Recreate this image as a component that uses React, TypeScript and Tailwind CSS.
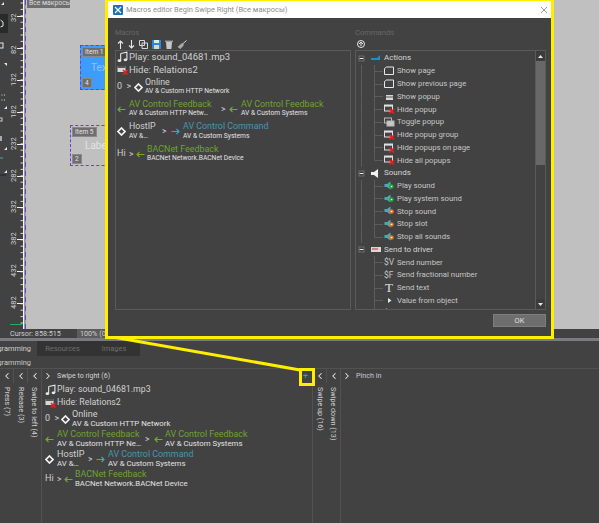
import React from "react";
import { ChevronLeft, ChevronRight } from "lucide-react";

const Music = () => (
  <svg width="11" height="12" viewBox="0 0 12 12" className="shrink-0">
    <path d="M4 2.2 L10.8 .8 V9" fill="none" stroke="#e8e8e8" strokeWidth="1.2" />
    <path d="M4 2.2 V10" fill="none" stroke="#e8e8e8" strokeWidth="1.2" />
    <ellipse cx="2.6" cy="10" rx="2" ry="1.5" fill="#e8e8e8" />
    <ellipse cx="9.2" cy="9" rx="2" ry="1.5" fill="#e8e8e8" />
  </svg>
);
const HideIcon = () => (
  <svg width="11" height="11" viewBox="0 0 11 11" className="shrink-0">
    <rect x=".5" y="2" width="8" height="6" fill="#d8d8d8" />
    <rect x=".5" y="2" width="8" height="2" fill="#555" />
    <path d="M6 6 L10.5 10.5 M10.5 6 L6 10.5" stroke="#ee1c1c" strokeWidth="1.7" />
  </svg>
);
const Diamond = () => (
  <svg width="9" height="9" viewBox="0 0 9 9" className="shrink-0">
    <path d="M4.5 1 L8 4.5 L4.5 8 L1 4.5 Z" fill="none" stroke="#f2f2f2" strokeWidth="1.7" />
  </svg>
);
const ArrowL = () => (
  <svg width="9" height="7" viewBox="0 0 9 7" className="shrink-0">
    <path d="M8.5 3.5 H1 M3.5 1 L1 3.5 L3.5 6" fill="none" stroke="#74ab2c" strokeWidth="1.1" />
  </svg>
);
const ArrowR = () => (
  <svg width="9" height="7" viewBox="0 0 9 7" className="shrink-0">
    <path d="M.5 3.5 H8 M5.5 1 L8 3.5 L5.5 6" fill="none" stroke="#3fa3cc" strokeWidth="1.2" />
  </svg>
);

const plain = "text-[#d0d0d0]";
const green = "text-[#6ea32d]";
const blue = "text-[#4795b5]";

type Cfg = {
  root: string;
  play: string;
  top: string;
  online: string;
  sub: string;
  h1: string;
  row: string;
  zero: string;
  dia: string;
  av1: string;
  gt1: string;
  arr2: string;
  host: string;
  gt2: string;
  arr3: string;
  gt3: string;
  arr4: string;
  sub1: string;
};

const small: Cfg = {
  root: "flex flex-col pl-[3px]",
  play: "text-[8.8px]",
  top: "text-[8.9px]",
  online: "text-[9.1px]",
  sub: "text-[7.8px]",
  h1: "h-[13px]",
  row: "h-[20px]",
  zero: "w-[16px]",
  dia: "w-[11px]",
  av1: "w-[88px]",
  gt1: "w-[9px]",
  arr2: "w-[11px]",
  host: "w-[31px]",
  gt2: "w-[8px]",
  arr3: "w-[12px]",
  gt3: "w-[7px]",
  arr4: "w-[11px]",
  sub1: "AV & Custom HTTP Ne…",
};
const big: Cfg = {
  root: "flex flex-col pl-[1px]",
  play: "text-[9.5px]",
  top: "text-[8.9px]",
  online: "text-[8.8px]",
  sub: "text-[6.7px]",
  h1: "h-[12.5px]",
  row: "h-[22.3px]",
  zero: "w-[17px]",
  dia: "w-[11px]",
  av1: "w-[92px]",
  gt1: "w-[8px]",
  arr2: "w-[12px]",
  host: "w-[33px]",
  gt2: "w-[9px]",
  arr3: "w-[12px]",
  gt3: "w-[7px]",
  arr4: "w-[11px]",
  sub1: "AV & Custom HTTP Netw…",
};

function Two({ top, sub, color, size, subSize }: { top: string; sub: string; color: string; size: string; subSize: string }) {
  return (
    <div className="flex flex-col">
      <span className={`${color} ${size} leading-[9.5px] whitespace-nowrap`}>{top}</span>
      <span className={`text-[#e2e2e2] ${subSize} leading-[9.5px] whitespace-nowrap`}>{sub}</span>
    </div>
  );
}

function MacroList({ c }: { c: Cfg }) {
  const box = "w-[12px] shrink-0 flex items-center";
  const gt = `${plain} text-[8.5px] shrink-0`;
  return (
    <div className={c.root}>
      <div className={`flex items-center ${c.h1}`}>
        <span className={box}><Music /></span>
        <span className={`${plain} ${c.play} whitespace-nowrap`}>Play: sound_04681.mp3</span>
      </div>
      <div className={`flex items-center ${c.h1}`}>
        <span className={box}><HideIcon /></span>
        <span className={`${plain} ${c.play} whitespace-nowrap`}>Hide: Relations2</span>
      </div>
      <div className={`flex items-center ${c.row}`}>
        <span className={`${plain} ${c.zero} text-[9px] shrink-0 whitespace-pre`}>0 {" "}&gt;</span>
        <span className={`${c.dia} shrink-0 flex`}><Diamond /></span>
        <Two top="Online" sub="AV & Custom HTTP Network" color={plain} size={c.online} subSize={c.sub} />
      </div>
      <div className={`flex items-center ${c.row}`}>
        <span className={box}><ArrowL /></span>
        <div className={`${c.av1} shrink-0`}>
          <Two top="AV Control Feedback" sub={c.sub1} color={green} size={c.top} subSize={c.sub} />
        </div>
        <span className={`${gt} ${c.gt1}`}>&gt;</span>
        <span className={`${c.arr2} shrink-0 flex`}><ArrowL /></span>
        <Two top="AV Control Feedback" sub="AV & Custom Systems" color={green} size={c.top} subSize={c.sub} />
      </div>
      <div className={`flex items-center ${c.row}`}>
        <span className={box}><Diamond /></span>
        <div className={`${c.host} shrink-0`}>
          <Two top="HostIP" sub="AV &…" color={plain} size={c.online} subSize={c.sub} />
        </div>
        <span className={`${gt} ${c.gt2}`}>&gt;</span>
        <span className={`${c.arr3} shrink-0 flex`}><ArrowR /></span>
        <Two top="AV Control Command" sub="AV & Custom Systems" color={blue} size={c.top} subSize={c.sub} />
      </div>
      <div className={`flex items-center ${c.row}`}>
        <span className={`${plain} ${box} text-[9px]`}>Hi</span>
        <span className={`${gt} ${c.gt3}`}>&gt;</span>
        <span className={`${c.arr4} shrink-0 flex`}><ArrowL /></span>
        <Two top="BACNet Feedback" sub="BACNet Network.BACNet Device" color={green} size={c.top} subSize={c.sub} />
      </div>
    </div>
  );
}

const Guide = ({ last, vert = true }: { last?: boolean; vert?: boolean }) => (
  <svg width="28" height="12.75" viewBox="0 0 28 12.75" className="shrink-0">
    {vert && <path d="M5.5 0 V12.75" stroke="#5c5c5c" />}
    <path d={last ? "M18.5 0 V6.5" : "M18.5 0 V12.75"} stroke="#5c5c5c" />
    <path d="M18.5 6.5 H27" stroke="#5c5c5c" />
  </svg>
);

type K = "page" | "popup" | "hide" | "toggle" | "play" | "stop" | "v" | "f" | "t" | "tri";
function TIcon({ k }: { k: K }) {
  if (k === "v" || k === "f")
    return <span className="w-[13px] shrink-0 text-[8.5px] leading-none text-[#c4c4c4]">{k === "v" ? "$V" : "$F"}</span>;
  if (k === "t")
    return <span className="w-[13px] shrink-0 pl-[1px] text-[13px] leading-none text-[#e0e0e0] [font-family:'Liberation_Serif',serif]">T</span>;
  return (
    <svg width="13" height="12" viewBox="0 0 13 12" className="shrink-0">
      {k === "page" && <path d="M.5 9.5 V3.5 L2.5 2 H9.5 V9.5 Z" fill="none" stroke="#e8e8e8" />}
      {k === "popup" && (
        <>
          <rect x="2" y="4" width="7" height="5" fill="#d8d8d8" />
          <rect x="2" y="5.5" width="7" height="1" fill="#555" />
        </>
      )}
      {k === "hide" && (
        <>
          <rect x=".5" y="2" width="8" height="6" fill="#444" stroke="#e0e0e0" />
          <rect x="1" y="2" width="7" height="1.6" fill="#e0e0e0" />
          <path d="M5.5 6 L10 10.5 M10 6 L5.5 10.5" stroke="#ee1c1c" strokeWidth="1.7" />
        </>
      )}
      {k === "toggle" && (
        <>
          <rect x=".5" y="2" width="7" height="5" fill="#444" stroke="#b8b8b8" />
          <rect x="3" y="5" width="7" height="5" fill="#c8c8c8" stroke="#b8b8b8" />
        </>
      )}
      {(k === "play" || k === "stop") && (
        <>
          <path d="M.5 4 H3 L6.5 1.5 V9.5 L3 7 H.5 Z" fill="#4aa7b5" />
          <circle cx="7.5" cy="6.5" r="2.3" fill={k === "play" ? "#1faa2c" : "#e8791a"} />
          <circle cx="7.5" cy="6.5" r=".8" fill="#fff" />
        </>
      )}
      {k === "tri" && <path d="M4 3 L7.5 5.5 L4 8 Z" fill="#e8e8e8" />}
    </svg>
  );
}

function Leaf({ k, t, last, vert }: { k: K; t: string; last?: boolean; vert?: boolean }) {
  return (
    <div className="flex items-center h-[12.75px]">
      <Guide last={last} vert={vert} />
      <TIcon k={k} />
      <span className="text-[7.75px] text-[#c6c6c6] whitespace-nowrap">{t}</span>
    </div>
  );
}

function Parent({ icon, t }: { icon: React.ReactNode; t: string }) {
  return (
    <div className="flex items-center h-[12.75px]">
      <svg width="15" height="12.75" viewBox="0 0 15 12.75" className="shrink-0">
        <rect x="3" y="4" width="5" height="5" fill="#3d3d3d" stroke="#777" strokeWidth=".8" />
        <path d="M3.6 6.5 H7.4" stroke="#e8e8e8" />
      </svg>
      <span className="w-[13px] shrink-0 flex items-center">{icon}</span>
      <span className="text-[8px] text-[#d4d4d4] whitespace-nowrap">{t}</span>
    </div>
  );
}

function CollapsedCol({ label, full }: { label: string; full?: boolean }) {
  return (
    <div className={full ? "w-[14px] shrink-0 border-r border-[#525252] flex flex-col items-center" : "w-[14px] shrink-0 flex flex-col items-center"}>
      <div className={full ? "w-full h-[14px] flex items-center justify-center shrink-0" : "w-full h-[14px] flex items-center justify-center shrink-0 border-r border-[#525252]"}>
        <ChevronLeft size={10} strokeWidth={2.5} color="#e8e8e8" />
      </div>
      <span className="pt-[4px] text-[7.2px] leading-[11px] text-[#cfcfcf] whitespace-nowrap [writing-mode:vertical-rl]">{label}</span>
    </div>
  );
}

const rulerLabels: [number, string][] = [
  [16, "32"], [48, "82"], [80, "132"], [112, "182"], [144, "232"], [176, "282"], [207, "332"], [239, "382"], [271, "432"], [303, "482"],
];

function Ruler() {
  const minor: number[] = [];
  for (let y = 3; y < 329; y += 6.4) minor.push(y);
  return (
    <svg width="26" height="329" viewBox="0 0 26 329" className="shrink-0 block">
      <rect x="0" y="0" width="23" height="329" fill="#424242" />
      <rect x="23" y="0" width="3" height="329" fill="#9a9a9a" />
      <rect x="0" y="14" width="8" height="19" fill="#2a2a2a" />
      <path d="M.5 20 L3 22 L3 26 L.5 27" fill="none" stroke="#e8e8e8" />
      <rect x="-2" y="43" width="5" height="5" fill="none" stroke="#e8e8e8" />
      <path d="M-1 95 H5 M-1 100 H6" stroke="#ddd" strokeDasharray="1 1.5" />
      <rect x="-2" y="118" width="4" height="3" fill="none" stroke="#ccc" />
      <rect x="0" y="136" width="2" height="5" fill="#aaa" />
      <path d="M0 158 H3" stroke="#3aa6d0" />
      <path d="M0 175 H6" stroke="#222" />
      <path d="M4 63 L7 63 L7 66 Z M4 109 L7 109 L7 106 Z M4 150 L7 150 L7 147 Z M4 173 L7 173 L7 170 Z M1 5 L4 5 L4 2 Z" fill="#e8e8e8" />
      {minor.map((y) => (
        <path key={y} d={`M20.5 ${y} H23`} stroke="#d8d8d8" />
      ))}
      {rulerLabels.map(([y, t]) => (
        <g key={t}>
          <path d={`M17 ${y + 0.5} H23`} stroke="#f0f0f0" />
          <text x="0" y="0" transform={`translate(16 ${y + 6}) rotate(-90)`} fontSize="7.5" fill="#d0d0d0" fontFamily="Roboto,sans-serif">
            {t}
          </text>
        </g>
      ))}
      <path d="M10 324.5 H22" stroke="#22b14c" />
      <path d="M23.5 0 V329" stroke="#f4f4f4" />
      <path d="M25.5 0 V329" stroke="#6a3fd8" strokeDasharray="5 4" />
    </svg>
  );
}

const Chip = ({ t }: { t: string }) => (
  <div className="flex">
    <span className="bg-[#6e6e6e] border border-[#8a8a8a] px-[2px] text-[6.6px] leading-[8px] text-[#e4e4e4] whitespace-nowrap">{t}</span>
  </div>
);

export default function App() {
  return (
    <div className="relative w-[599px] h-[523px] overflow-hidden bg-[#424242] flex flex-col [font-family:Roboto,sans-serif]">
      {/* upper work area */}
      <div className="h-[329px] flex shrink-0">
        <Ruler />
        <div className="relative flex-1 bg-[#c0c0c0]">
          <div className="absolute left-[1px] top-[-1px] w-[43px] h-[9px] bg-[#6e6e6e] text-[6.8px] leading-[8px] text-[#dcdcdc] pl-[2px] whitespace-nowrap overflow-hidden">Все макросы</div>
          <div className="absolute left-[54px] top-[45px] w-[40px] h-[45px] bg-[#3f9cff] border border-dashed border-[#6a3fd8] flex flex-col justify-between p-[1px]">
            <Chip t="Item 1" />
            <div className="pl-[9px] text-[10px] leading-[10px] text-[#8cc4ff]">Text</div>
            <Chip t="4" />
          </div>
          <div className="absolute left-[44px] top-[125px] w-[45px] h-[41px] border border-dashed border-[#6a3fd8] flex flex-col justify-between p-[1px]">
            <Chip t="Item 5" />
            <div className="pl-[13px] text-[10px] leading-[10px] text-[#e4e4e4]">Label</div>
            <Chip t="2" />
          </div>
        </div>
      </div>
      {/* status */}
      <div className="h-[9px] flex shrink-0 text-[7.2px] leading-[9px] text-[#cfcfcf]">
        <div className="w-[77px] pl-[10px] whitespace-nowrap">Cursor: 858:515</div>
        <div className="w-[30px] bg-[#5c5c5c] pl-[3px] whitespace-nowrap overflow-hidden">100% (0</div>
      </div>
      <div className="h-[3px] shrink-0 bg-[#7a7c84]" />
      {/* tabs */}
      <div className="h-[15px] flex shrink-0 text-[7.4px] overflow-hidden">
        <div className="w-[37px] flex items-center justify-end pr-[6px] text-[#d0d0d0]">
          <span>ogramming</span>
        </div>
        <div className="w-[51px] bg-[#333333] flex items-center justify-center text-[#6e6e6e]">Resources</div>
        <div className="w-[52px] bg-[#333333] flex items-center justify-center text-[#6e6e6e]">Images</div>
      </div>
      <div className="h-[12px] w-[31px] shrink-0 text-[7.4px] leading-[13px] text-[#c8c8c8] flex justify-end">
        <span>ogramming</span>
      </div>
      {/* lanes */}
      <div className="flex-1 flex border-t border-[#525252] min-h-0">
        <CollapsedCol label="Press (7)" />
        <CollapsedCol label="Release (3)" />
        <CollapsedCol label="Swipe to left (4)" full />
        <div className="w-[271px] shrink-0 border-r border-[#525252] flex flex-col">
          <div className="h-[14px] flex items-center shrink-0 pl-[1px] pr-[4px] text-[7px] text-[#d4d4d4]">
            <ChevronRight size={10} strokeWidth={2.5} color="#e8e8e8" />
            <span className="ml-[4px] flex-1 whitespace-nowrap">Swipe to right (6)</span>
            <span className="text-[9px] leading-none text-[#3e9cc0]">+</span>
          </div>
          <MacroList c={small} />
        </div>
        <CollapsedCol label="Swipe up (16)" />
        <CollapsedCol label="Swipe down (13)" full />
        <div className="flex-1">
          <div className="h-[14px] flex items-center pl-[1px] text-[7.2px] text-[#c8c8d8]">
            <ChevronRight size={10} strokeWidth={2.5} color="#e8e8e8" />
            <span className="ml-[4px]">Pinch in</span>
          </div>
        </div>
      </div>

      {/* yellow callout */}
      <svg width="599" height="523" viewBox="0 0 599 523" className="absolute left-0 top-0 pointer-events-none">
        <path d="M107 336 L300 370" stroke="#ffee00" strokeWidth="3" fill="none" />
      </svg>
      <div className="absolute left-[299px] top-[368px] w-[16px] h-[18px] border-[3px] border-[#ffee00]" />

      {/* modal */}
      <div className="absolute left-[105px] top-[-2px] w-[449px] h-[341px] border-[3px] border-[#ffee00] bg-[#424242] flex flex-col">
        <div className="h-[17px] bg-white flex items-center shrink-0 pl-[5px] pr-[3px]">
          <svg width="10" height="10" viewBox="0 0 10 10" className="shrink-0">
            <rect width="10" height="10" rx="1" fill="#1c6fb8" />
            <path d="M2 2 L8 8 M8 2 L2 8" stroke="#fff" strokeWidth="1.2" />
          </svg>
          <span className="ml-[3px] flex-1 text-[7.5px] text-[#8c8c8c] whitespace-nowrap">Macros editor Begin Swipe Right (Все макросы)</span>
          <svg width="8" height="8" viewBox="0 0 8 8" className="shrink-0">
            <path d="M1 1 L7 7 M7 1 L1 7" stroke="#9a9a9a" />
          </svg>
        </div>
        <div className="flex-1 min-h-0 flex flex-col pl-[7px] pr-[5px] pt-[10px]">
          <div className="flex gap-[4px] h-[282px] shrink-0">
            <div className="w-[236px] shrink-0 flex flex-col">
              <div className="h-[7px] text-[7.2px] leading-[9px] text-[#686868]">Macros</div>
              <div className="h-[15px] shrink-0 flex items-center gap-[4px] pl-[2px] pt-[3px]">
                <svg width="7" height="9" viewBox="0 0 7 9"><path d="M3.5 9 V1 M1 3.5 L3.5 1 L6 3.5" fill="none" stroke="#e8e8e8" strokeWidth="1.1" /></svg>
                <svg width="7" height="9" viewBox="0 0 7 9"><path d="M3.5 0 V8 M1 5.5 L3.5 8 L6 5.5" fill="none" stroke="#e8e8e8" strokeWidth="1.1" /></svg>
                <svg width="9" height="9" viewBox="0 0 9 9"><path d="M.5.5 H5.5 V5.5 H.5 Z M3 3 H8.5 V8.5 H3 Z" fill="none" stroke="#d8d8d8" /></svg>
                <svg width="9" height="9" viewBox="0 0 9 9"><rect width="9" height="9" fill="#2b87d8" /><rect x="2" y="0" width="5" height="3" fill="#e8e8e8" /><rect x="2" y="5" width="5" height="4" fill="#d0e0c0" /></svg>
                <svg width="8" height="9" viewBox="0 0 8 9"><path d="M1 2 H7 L6.4 9 H1.6 Z" fill="#c8c8c8" /><path d="M0 1.2 H8" stroke="#c8c8c8" /></svg>
                <svg width="10" height="9" viewBox="0 0 10 9"><path d="M9.5.5 L5 4.5" stroke="#d8d8d8" /><path d="M5 3 L7 5 L3.5 9 L.5 7 Z" fill="#9fb09f" /></svg>
              </div>
              <div className="flex-1 border border-[#5a5a5a] overflow-hidden">
                <MacroList c={big} />
              </div>
            </div>
            <div className="w-[191px] shrink-0 flex flex-col">
              <div className="h-[7px] text-[7.6px] leading-[9px] text-[#686868]">Commands</div>
              <div className="h-[15px] shrink-0 flex items-center pl-[2px] pt-[3px]">
                <svg width="8" height="8" viewBox="0 0 8 8"><circle cx="4" cy="4" r="3.5" fill="none" stroke="#e8e8e8" /><path d="M4 2 V6 M2 4 L4 2 L6 4" fill="none" stroke="#e8e8e8" /></svg>
              </div>
              <div className="flex-1 min-h-0 border border-[#5a5a5a] flex overflow-hidden">
                <div className="flex-1 min-w-0 pt-[1px] overflow-hidden">
                  <Parent t="Actions" icon={<svg width="9" height="6" viewBox="0 0 9 6"><path d="M0 5 H9 V0 L6 3 H0 Z" fill="#1d8fc0" /></svg>} />
                  <Leaf k="page" t="Show page" />
                  <Leaf k="page" t="Show previous page" />
                  <Leaf k="popup" t="Show popup" />
                  <Leaf k="hide" t="Hide popup" />
                  <Leaf k="toggle" t="Toggle popup" />
                  <Leaf k="hide" t="Hide popup group" />
                  <Leaf k="hide" t="Hide popups on page" />
                  <Leaf k="hide" t="Hide all popups" last />
                  <Parent t="Sounds" icon={<svg width="8" height="9" viewBox="0 0 8 9"><path d="M0 3 H3 L7 0 V9 L3 6 H0 Z" fill="#f0f0f0" /></svg>} />
                  <Leaf k="play" t="Play sound" />
                  <Leaf k="play" t="Play system sound" />
                  <Leaf k="stop" t="Stop sound" />
                  <Leaf k="stop" t="Stop slot" />
                  <Leaf k="stop" t="Stop all sounds" last />
                  <Parent t="Send to driver" icon={<svg width="10" height="5" viewBox="0 0 10 5"><rect width="10" height="5" fill="#d8d8d8" /><path d="M2 1 V3 M4 1 V3 M6 1 V3" stroke="#c03030" /></svg>} />
                  <Leaf k="v" t="Send number" vert={false} />
                  <Leaf k="f" t="Send fractional number" vert={false} />
                  <Leaf k="t" t="Send text" vert={false} />
                  <Leaf k="tri" t="Value from object" vert={false} />
                  <Leaf k="v" t="Send slot" vert={false} />
                </div>
                <div className="w-[10px] shrink-0 border-l border-[#5a5a5a] flex flex-col">
                  <div className="h-[10px] shrink-0 bg-[#3c3c3c] flex items-center justify-center">
                    <svg width="5" height="3" viewBox="0 0 5 3"><path d="M0 3 L2.5 0 L5 3 Z" fill="#e8e8e8" /></svg>
                  </div>
                  <div className="h-[104px] shrink-0 bg-[#686868]" />
                  <div className="flex-1" />
                  <div className="h-[10px] shrink-0 bg-[#3c3c3c] flex items-center justify-center">
                    <svg width="5" height="3" viewBox="0 0 5 3"><path d="M0 0 L2.5 3 L5 0 Z" fill="#e8e8e8" /></svg>
                  </div>
                </div>
              </div>
            </div>
          </div>
          <div className="flex justify-end pt-[4px]">
            <div className="w-[53px] h-[13px] bg-[#6e6e6e] border border-[#7e7e7e] flex items-center justify-center text-[7.5px] text-[#e0e0e0]">OK</div>
          </div>
        </div>
      </div>
    </div>
  );
}
